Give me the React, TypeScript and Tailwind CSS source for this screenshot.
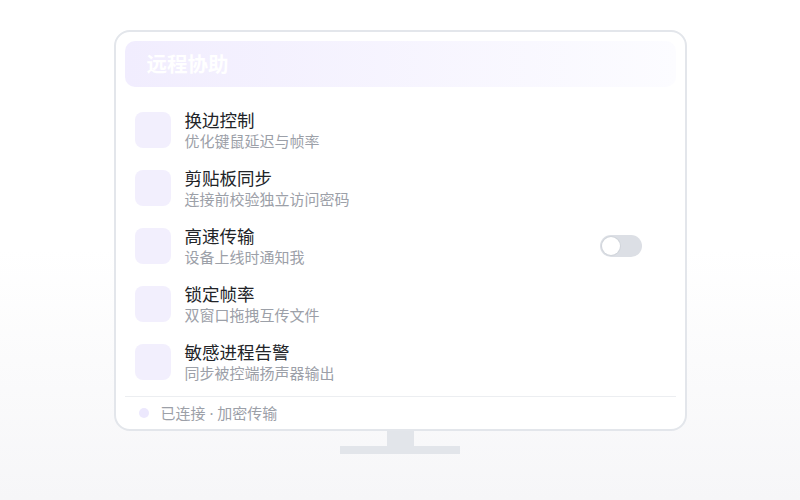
import React, { useState } from "react";

const items = [
  { title: "换边控制", desc: "优化键鼠延迟与帧率" },
  { title: "剪贴板同步", desc: "连接前校验独立访问密码" },
  { title: "高速传输", desc: "设备上线时通知我", toggle: true },
  { title: "锁定帧率", desc: "双窗口拖拽互传文件" },
  { title: "敏感进程告警", desc: "同步被控端扬声器输出" },
];

const Toggle: React.FC = () => {
  const [on, setOn] = useState(false);
  return (
    <button
      type="button"
      onClick={() => setOn(!on)}
      className={
        on
          ? "relative h-[22px] w-[42px] rounded-full bg-[#c4b5fd] p-[2px] flex justify-end"
          : "relative h-[22px] w-[42px] rounded-full bg-[#dcdfe5] p-[2px] flex justify-start"
      }
    >
      <span className="block h-[18px] w-[18px] rounded-full bg-white shadow-[0_0_0_1px_#d1d5db]" />
    </button>
  );
};

export default function App() {
  return (
    <div
      className="flex h-[500px] w-full flex-col items-center bg-linear-to-b from-white from-50% to-[#f6f6f8] pt-[30px]"
      style={{ fontFamily: '"Noto Sans", "Noto Sans CJK SC", sans-serif' }}
    >
      <div className="flex h-[401px] w-[573px] flex-col rounded-[16px] border-2 border-[#e3e6eb] bg-white px-[9px] pt-[9px]">
        <div className="flex h-[46px] items-center rounded-[10px] bg-linear-to-r from-[#f1edfe] to-[#fcfcff] pl-[22px]">
          <h1 className="text-[20.5px] font-bold text-white">远程协助</h1>
        </div>

        <div className="mt-[14px] flex flex-col">
          {items.map((item) => (
            <div key={item.title} className="flex h-[58px] items-center px-[10px] pr-[34px]">
              <div className="h-9 w-9 rounded-[8px] bg-[#f2effd]" />
              <div className="ml-[14px] flex flex-1 flex-col">
                <span className="text-[17.5px] leading-[22px] text-[#222428]">{item.title}</span>
                <span className="mt-[1px] text-[15px] leading-[19px] text-[#9ca0a8]">{item.desc}</span>
              </div>
              {item.toggle && <Toggle />}
            </div>
          ))}
        </div>

        <div className="mt-[5px] flex h-[33px] items-center border-t border-[#eceef1] pl-[14px]">
          <span className="h-[10px] w-[10px] rounded-full bg-[#ece8fd]" />
          <span className="ml-[12px] text-[15px] text-[#9ca0a8]">已连接 · 加密传输</span>
        </div>
      </div>

      <div className="h-[15px] w-[27px] bg-[#e2e5ea]" />
      <div className="h-[8px] w-[120px] bg-[#e2e5ea]" />
    </div>
  );
}
